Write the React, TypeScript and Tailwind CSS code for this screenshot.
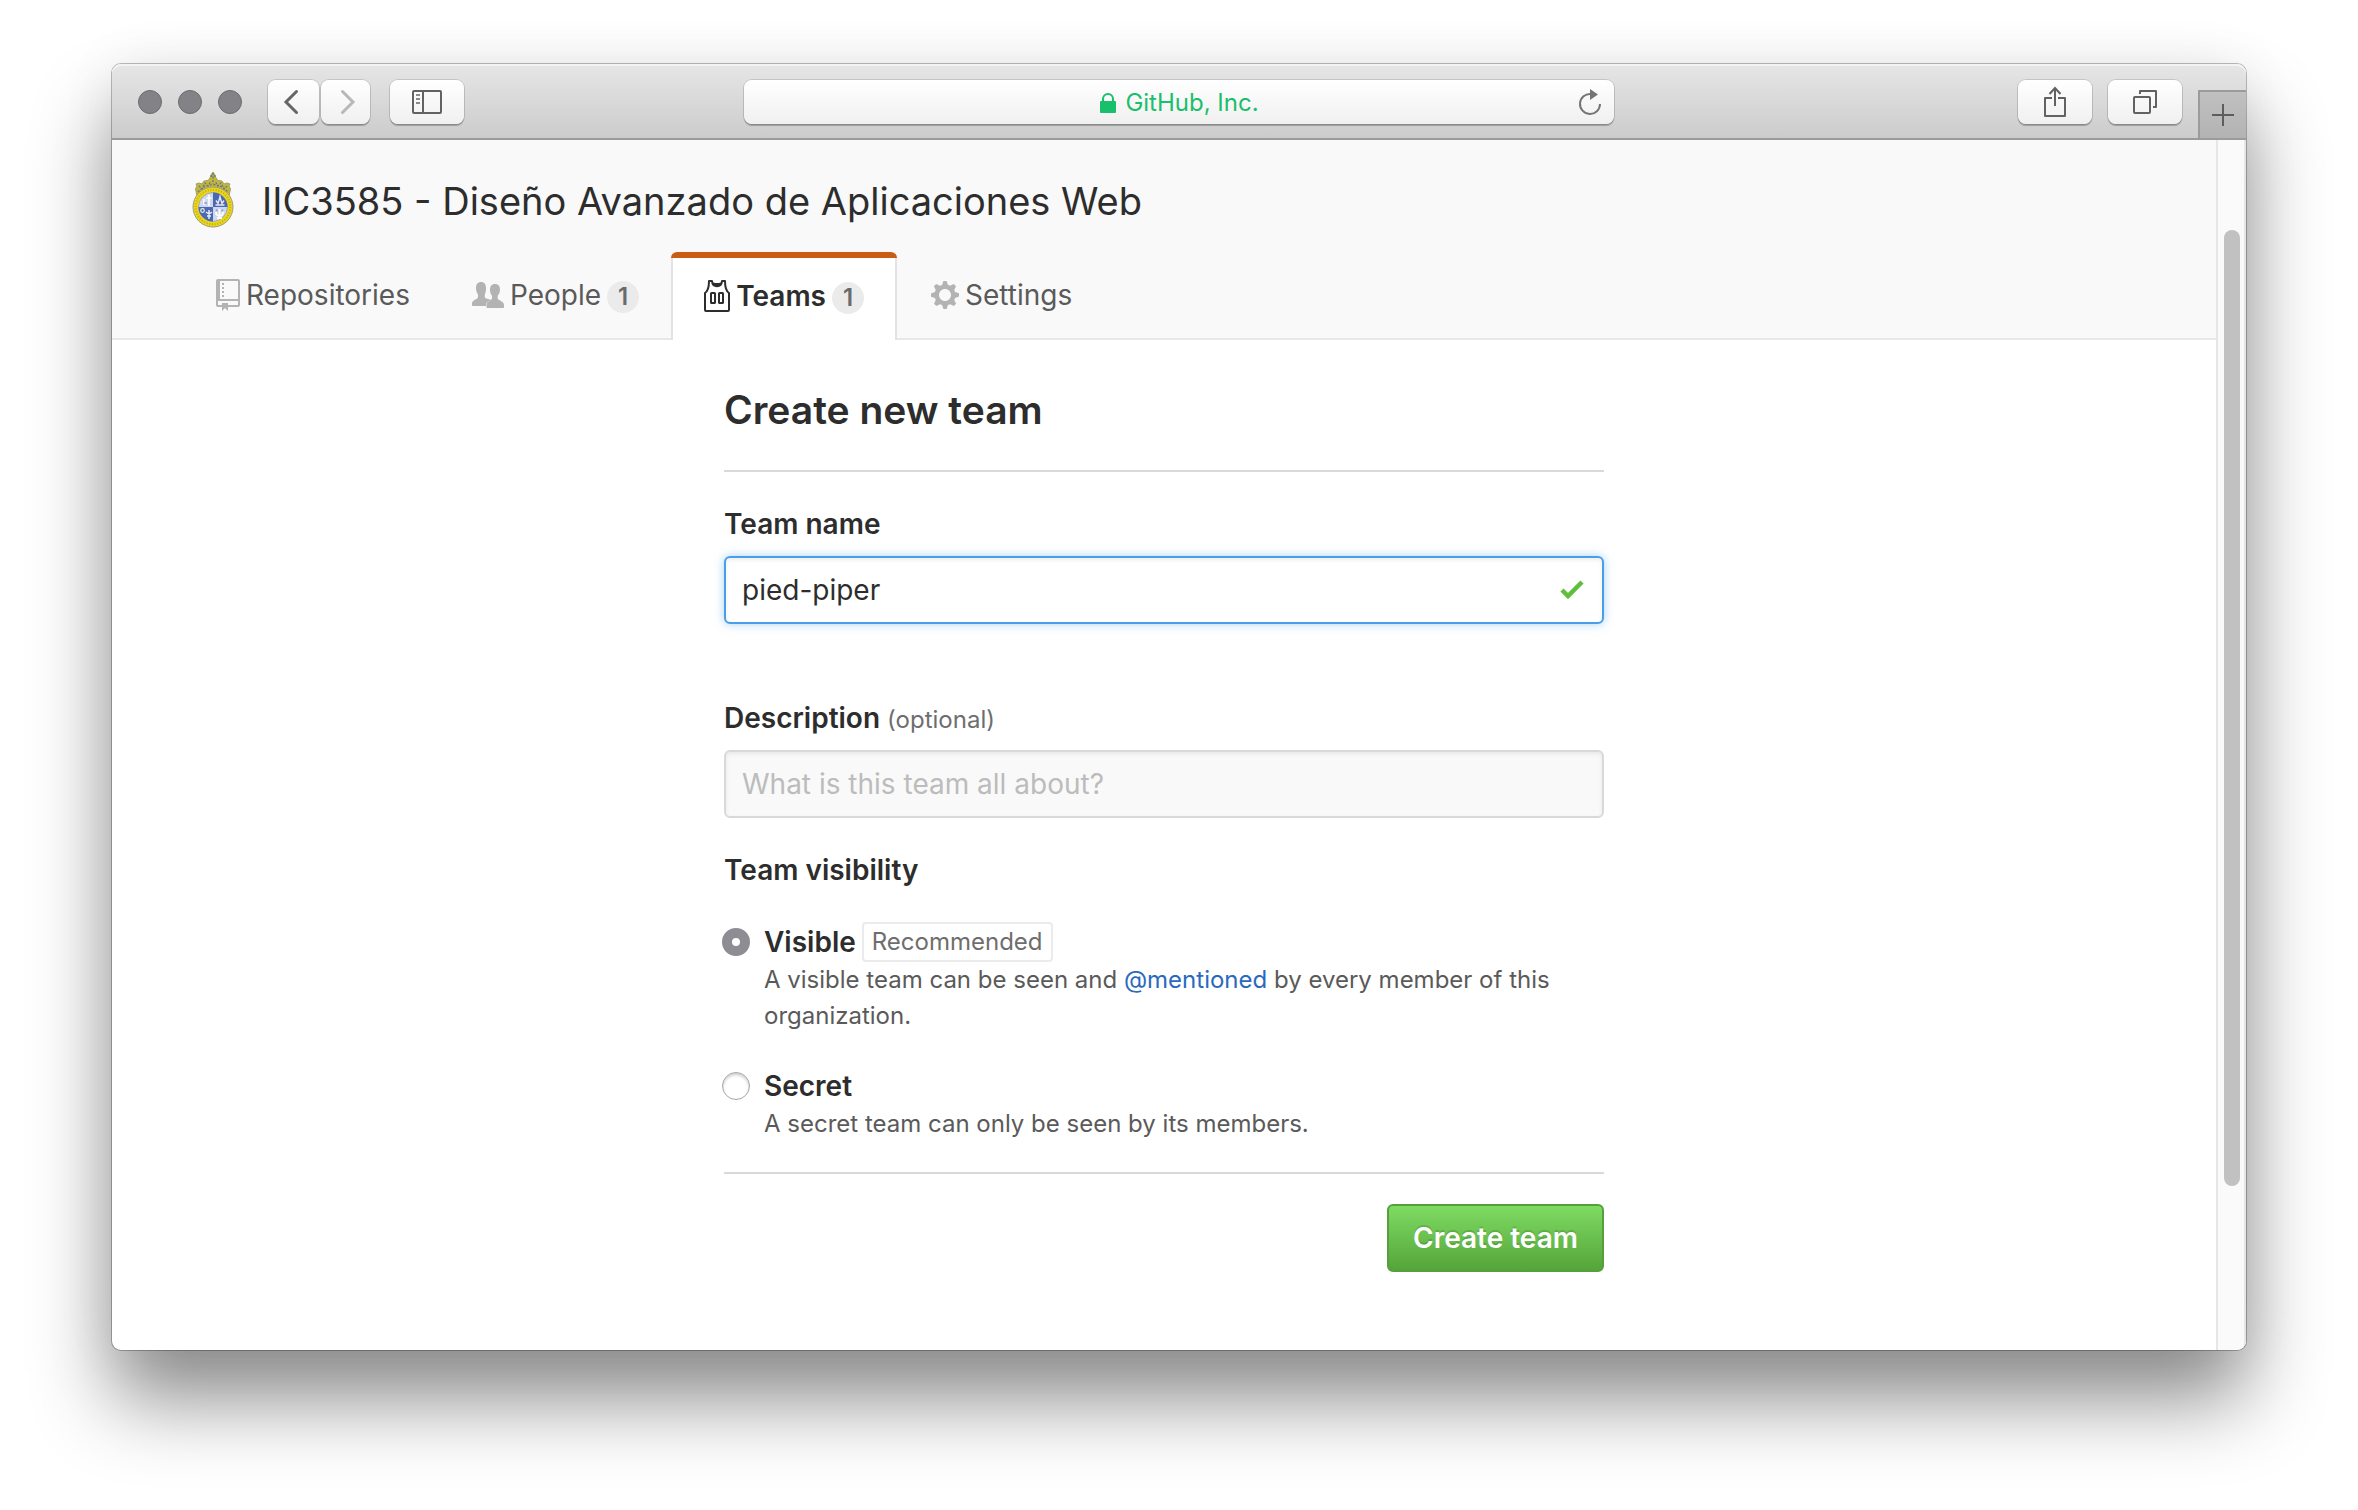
import React from "react";

function Crest() {
  return (
    <svg viewBox="0 0 42 56" className="h-14 w-[42px] shrink-0" aria-hidden="true">
      <path
        d="M5 24 L3.500 17 L5 14 L4 12 L7 11 L10 12 L12 9 L16 8.500 L18 6 L19 3 L21 0 L23 3 L24 6 L26 8.500 L30 9 L32 12 L35 11 L38 12 L37 14 L38.500 17 L37 24 Z"
        fill="#c3b739"
        stroke="#a09f68"
        strokeWidth="1"
      />
      <g fill="none" stroke="#66748c" strokeWidth="1.300" strokeDasharray="2 1.500">
        <path d="M21 1 V12" />
        <path d="M18.500 4 H23.500" />
        <path d="M6 20 Q12 13 21 12.500 Q30 13 36 20" />
        <path d="M7 14 L10 17 L13 11 L16 14 L19 9" />
        <path d="M35 14 L32 17 L29 11 L26 14 L23 9" />
      </g>
      <circle cx="21" cy="35" r="20" fill="#f0d80f" stroke="#9a9c88" strokeWidth="1" />
      <circle cx="21" cy="35" r="17.300" fill="none" stroke="#8c8d55" strokeWidth="2.200" strokeDasharray="1.200 1.500" opacity=".5" />
      <circle cx="21" cy="35" r="14.500" fill="#cfd8ee" stroke="#8f9cb0" strokeWidth=".8" />
      <path d="M21 35 V20.500 A14.500 14.500 0 0 1 35.500 35 Z M21 35 V49.500 A14.500 14.500 0 0 1 6.500 35 Z" fill="#4c69ae" />
      <path d="M17 22.500 V34 M14.500 26 H19.500 M12 27 V33" stroke="#fff" strokeWidth="1.600" />
      <path d="M12 31 H15" stroke="#6f86bf" strokeWidth="1.200" />
      <path d="M23.500 33 H32.500 M24 28.500 L26 31.500 L28 25 L30 31.500 L32 28.500 M28 23.500 V26" stroke="#e3e9f7" strokeWidth="1.400" fill="none" />
      <circle cx="10.500" cy="38.500" r="1.800" fill="none" stroke="#e6ecf8" strokeWidth="1.200" />
      <path d="M17 38 V47 M14 40 Q17 43 20 40 M15 44 H19" stroke="#e6ecf8" strokeWidth="1.500" fill="none" />
      <path d="M27.500 37 V46 M24 40 Q24 44 27.500 43.500 Q31 44 31 40 M25 46 H30" stroke="#fff" strokeWidth="1.800" fill="none" />
      <path d="M24 37.500 L25.500 39 M31 37.500 L29.500 39" stroke="#8399cb" strokeWidth="1.200" />
    </svg>
  );
}

function RepoIcon() {
  return (
    <svg viewBox="0 0 12 16" className="h-8 w-6 shrink-0 fill-[#b3b3b3]" aria-hidden="true">
      <path fillRule="evenodd" d="M4 9H3V8h1v1zm0-3H3v1h1V6zm0-2H3v1h1V4zm0-2H3v1h1V2zm8-1v12c0 .55-.45 1-1 1H6v2l-1.500-1.500L3 16v-2H1c-.55 0-1-.45-1-1V1c0-.55.45-1 1-1h10c.55 0 1 .45 1 1zm-1 10H1v2h2v-1h3v1h5v-2zm0-10H2v9h9V1z" />
    </svg>
  );
}

function PeopleIcon() {
  return (
    <svg viewBox="0 0 32 28" className="h-7 w-8 shrink-0 fill-[#b3b3b3]" aria-hidden="true">
      <path d="M9 1C5.500 1 4 3.500 4 7c0 3 .8 5 2 6.500v2.800C5.600 18.500 0 19 0 22.500V24c0 .6.500 1 1 1h13v-1c0-3 3-4 5-5-2-1.200-6-1.500-6.200-2.800v-2.700C13.500 12 14 10 14 7c0-3.500-1.500-6-5-6z" />
      <path d="M23 3c-3.500 0-5 2.300-5 5.600 0 2.900.7 4.700 2 6.200V17.600c-.5 1.900-5.500 2.600-5.500 6.400V26c0 .6.500 1 1 1H31c.6 0 1-.4 1-1v-2c0-3.800-6-4.500-6.300-6.400v-2.800c1.200-1.500 2.300-3.300 2.300-6.200C28 5.300 26.500 3 23 3z" />
    </svg>
  );
}

function JerseyIcon() {
  return (
    <svg viewBox="0 0 26 32" className="h-8 w-[26px] shrink-0" aria-hidden="true">
      <path d="M5 1H8C8.500 8 17.500 8 18 1H21C21 8 22 11 25 13V30C25 30.600 24.600 31 24 31H2C1.400 31 1 30.600 1 30V13C4 11 5 8 5 1Z" fill="none" stroke="#2d2d2d" strokeWidth="2" strokeLinejoin="round" />
      <path d="M8 1.500C9.500 3.500 16.500 3.500 18 1.500C17.500 8 8.500 8 8 1.500Z" fill="#2d2d2d" />
      <rect x="7" y="13" width="4" height="10" rx=".6" fill="none" stroke="#2d2d2d" strokeWidth="2" />
      <rect x="15" y="13" width="4" height="10" rx=".6" fill="none" stroke="#2d2d2d" strokeWidth="2" />
    </svg>
  );
}

function GearIcon() {
  return (
    <svg viewBox="0 0 14 16" className="h-8 w-7 shrink-0 fill-[#b3b3b3]" aria-hidden="true">
      <path fillRule="evenodd" d="M14 8.770v-1.600l-1.940-.64-.45-1.090.88-1.840-1.130-1.130-1.810.91-1.090-.45-.69-1.920h-1.600l-.63 1.940-1.110.45-1.840-.88-1.130 1.130.91 1.810-.45 1.090L0 7.230v1.590l1.940.64.45 1.090-.88 1.840 1.130 1.130 1.810-.91 1.090.45.69 1.920h1.590l.63-1.940 1.110-.45 1.840.88 1.130-1.130-.92-1.810.47-1.090L14 8.750v.02zM7 11c-1.660 0-3-1.340-3-3s1.340-3 3-3 3 1.340 3 3-1.340 3-3 3z" />
    </svg>
  );
}

const toolButton =
  "flex h-11 items-center justify-center rounded-lg bg-linear-to-b from-white to-[#f0f0f0] shadow-[0_0_0_1px_rgba(0,0,0,0.12),0_2px_1px_rgba(0,0,0,0.25)]";

function Toolbar() {
  return (
    <header className="flex h-[76px] items-start rounded-t-[9px] border-b-2 border-[#9b9b9b] bg-linear-to-b from-[#e6e6e6] to-[#cccccc] shadow-[inset_0_2px_0_#f3f3f3]">
      <div className="flex flex-1 items-start pt-4">
        <div className="ml-[26px] flex h-11 items-center gap-4">
          {["Close", "Minimize", "Zoom"].map((name) => (
            <button key={name} aria-label={name} className="size-6 rounded-full border border-[#6c6c70] bg-[#838287]" />
          ))}
        </div>
        <div className="ml-[26px] flex gap-0.5">
          <button aria-label="Back" className={toolButton + " w-[51px] pr-1.5"}>
            <svg viewBox="0 0 16 26" className="h-[26px] w-4" fill="none" stroke="#666666" strokeWidth="3">
              <path d="M13.500 2.500 L3 13 L13.500 23.500" strokeLinecap="round" />
            </svg>
          </button>
          <button aria-label="Forward" className={toolButton + " w-[49px] pl-1"}>
            <svg viewBox="0 0 16 26" className="h-[26px] w-4" fill="none" stroke="#b8b8b8" strokeWidth="3">
              <path d="M2.500 2.500 L13 13 L2.500 23.500" strokeLinecap="round" />
            </svg>
          </button>
        </div>
        <button aria-label="Sidebar" className={toolButton + " ml-5 w-[74px]"}>
          <svg viewBox="0 0 30 24" className="h-6 w-[30px]" fill="none" stroke="#626262" strokeWidth="2">
            <rect x="1" y="1" width="28" height="22" rx="1" />
            <path d="M11 1 V23" />
            <path d="M4 5 H8 M4 9 H8 M4 13 H8" stroke="#8a8a8a" />
          </svg>
        </button>
      </div>
      <div className="mt-4 flex h-11 w-[870px] items-center rounded-lg bg-linear-to-b from-white to-[#f0f0f0] px-3 shadow-[0_0_0_1px_rgba(0,0,0,0.12),0_2px_1px_rgba(0,0,0,0.25)]">
        <span className="w-6" />
        <div className="flex flex-1 items-center justify-center gap-2 pt-0.5 text-[24px] leading-8 text-[#19bf6c]">
          <svg viewBox="0 0 18 20" className="h-5 w-[18px]" aria-hidden="true">
            <rect x="1" y="8" width="16" height="12" rx="1" fill="#19bf6c" />
            <path d="M4 9 V6 A5 5 0 0 1 14 6 V9" fill="none" stroke="#19bf6c" strokeWidth="2" />
          </svg>
          <span>GitHub, Inc.</span>
        </div>
        <button aria-label="Reload" className="flex w-6 justify-center">
          <svg viewBox="0 0 24 28" className="h-7 w-6" fill="none">
            <path d="M13 6 A10 10 0 1 0 22 16" stroke="#757575" strokeWidth="2" />
            <path d="M12 1 L20 6.500 L12 12 Z" fill="#757575" />
          </svg>
        </button>
      </div>
      <div className="flex flex-1 items-start justify-end">
        <div className="mt-4 mr-4 flex gap-4">
          <button aria-label="Share" className={toolButton + " w-[74px]"}>
            <svg viewBox="0 0 22 32" className="h-8 w-[22px]" fill="none" stroke="#626262" strokeWidth="2">
              <path d="M8 12 H1 V30 H21 V12 H14" strokeLinejoin="round" />
              <path d="M11 20 V2 M5.500 8 L11 2 L16.500 8" />
            </svg>
          </button>
          <button aria-label="Show all tabs" className={toolButton + " w-[74px]"}>
            <svg viewBox="0 0 24 24" className="size-6" fill="none" stroke="#626262" strokeWidth="2">
              <rect x="1" y="7" width="16" height="16" rx="1" />
              <path d="M7 4 V1 H23 V17 H20" strokeLinejoin="round" />
            </svg>
          </button>
        </div>
        <button aria-label="New tab" className="mt-[26px] flex h-12 w-12 items-center justify-center border-t-2 border-l-2 border-[#9b9b9b] bg-linear-to-b from-[#c0c0c0] to-[#b3b3b3]">
          <svg viewBox="0 0 22 22" className="size-[22px]" stroke="#5d5d5d" strokeWidth="2">
            <path d="M11 0 V22 M0 11 H22" />
          </svg>
        </button>
      </div>
    </header>
  );
}

function Count({ children }: { children: React.ReactNode }) {
  return (
    <span className="mt-1 ml-1.5 flex size-8 items-center justify-center rounded-full bg-[#ebebeb] text-[24px] font-semibold leading-8 text-[#6b6b6b]">
      {children}
    </span>
  );
}

function OrgHeader() {
  return (
    <div className="border-b-2 border-[#e8e8e8] bg-[#f9f9f9] px-20 pt-8">
      <div className="flex h-14 items-center gap-7">
        <Crest />
        <h1 className="pt-0.5 text-[38px] leading-[60px] text-[#2d2d2d]">IIC3585 - Diseño Avanzado de Aplicaciones Web</h1>
      </div>
      <nav className="-mb-0.5 mt-6 flex h-[88px] text-[28px] leading-10 text-[#5a5a5a]">
        <a href="#repositories" className="flex h-[82px] items-center px-6 pt-1">
          <RepoIcon />
          <span className="ml-1.5">Repositories</span>
        </a>
        <a href="#people" className="ml-3.5 flex h-[82px] items-center px-6 pt-1">
          <PeopleIcon />
          <span className="ml-1.5">People</span>
          <Count>1</Count>
        </a>
        <a
          href="#teams"
          aria-current="page"
          className="ml-2 flex h-[88px] w-[226px] flex-col overflow-hidden rounded-t-md bg-[#ca5d14] pt-1.5 font-semibold text-[#2d2d2d]"
        >
          <span className="flex h-[82px] items-center justify-center border-x-2 border-[#e3e3e3] bg-white pb-1.5">
            <JerseyIcon />
            <span className="ml-1.5">Teams</span>
            <Count>1</Count>
          </span>
        </a>
        <a href="#settings" className="ml-2.5 flex h-[82px] items-center px-6 pt-1">
          <GearIcon />
          <span className="ml-1.5">Settings</span>
        </a>
      </nav>
    </div>
  );
}

function TeamForm() {
  return (
    <form className="mx-auto flex w-full max-w-[880px] flex-col pt-11 text-[28px] leading-10 text-[#2d2d2d]" onSubmit={(e) => e.preventDefault()}>
      <h2 className="border-b-2 border-[#d9d9d9] pb-[34px] text-[39px] font-semibold leading-[52px]">Create new team</h2>

      <label htmlFor="team-name" className="mt-8 self-start font-semibold">Team name</label>
      <div className="relative mt-3">
        <input
          id="team-name"
          type="text"
          defaultValue="pied-piper"
          className="block h-[68px] w-full rounded-md border-2 border-[#4a9de8] bg-white px-4 shadow-[inset_0_2px_4px_rgba(0,0,0,0.075),0_0_10px_rgba(81,167,232,0.5)] outline-none"
        />
        <svg viewBox="0 0 24 20" className="absolute top-6 right-5 h-5 w-6" aria-hidden="true">
          <path d="M2 10 L8 16 L22 2" fill="none" stroke="#5fbf3c" strokeWidth="4.500" />
        </svg>
      </div>

      <label htmlFor="team-description" className="mt-[74px] h-10 self-start font-semibold">
        Description <span className="text-[24px] leading-none font-normal text-[#6e6e6e]">(optional)</span>
      </label>
      <input
        id="team-description"
        type="text"
        placeholder="What is this team all about?"
        className="mt-3 h-[68px] w-full rounded-md border-2 border-[#d9d9d9] bg-[#f9f9f9] px-4 shadow-[inset_0_2px_4px_rgba(0,0,0,0.075)] outline-none placeholder:text-[#bcbcbc]"
      />

      <fieldset className="mt-8 border-b-2 border-[#d9d9d9] pb-[30px]">
        <legend className="h-10 font-semibold">Team visibility</legend>
        <div className="flex gap-3.5 pt-8">
          <input
            id="visible"
            type="radio"
            name="visibility"
            defaultChecked
            className="-ml-0.5 mt-1.5 size-7 shrink-0 appearance-none rounded-full border-[10px] border-[#8e8d93] bg-white"
          />
          <div>
            <div className="flex h-10 items-center gap-1.5">
              <label htmlFor="visible" className="font-semibold">Visible</label>
              <span className="h-10 rounded border-2 border-[#ebebeb] px-2 text-[24px] leading-9 text-[#6e6e6e]">Recommended</span>
            </div>
            <p className="text-[24px] leading-9 text-[#5a5a5a]">
              A visible team can be seen and <a href="#mentions" className="text-[#2a69bd]">@mentioned</a> by every member of this organization.
            </p>
          </div>
        </div>
        <div className="mt-8 flex gap-3.5">
          <input
            id="secret"
            type="radio"
            name="visibility"
            className="-ml-0.5 mt-1.5 size-7 shrink-0 appearance-none rounded-full border border-[#a6a6a6] bg-white shadow-[inset_0_2px_3px_rgba(0,0,0,0.2)]"
          />
          <div>
            <label htmlFor="secret" className="block h-10 font-semibold">Secret</label>
            <p className="text-[24px] leading-9 text-[#5a5a5a]">A secret team can only be seen by its members.</p>
          </div>
        </div>
      </fieldset>

      <button
        type="submit"
        className="mt-[30px] mb-[78px] h-[68px] self-end rounded-md border-2 border-[#55a03c] bg-linear-to-b from-[#7fdb63] to-[#55a53a] px-6 font-semibold text-white [text-shadow:0_-2px_0_rgba(0,0,0,0.15)]"
      >
        Create team
      </button>
    </form>
  );
}

export default function App() {
  return (
    <div className="min-h-screen bg-white px-28 pt-16 pb-40 font-[Inter,'Liberation_Sans',sans-serif]">
      <div className="rounded-[9px] bg-white shadow-[0_0_0_1px_rgba(0,0,0,0.26),0_50px_80px_rgba(0,0,0,0.45),0_0_60px_rgba(0,0,0,0.06)]">
        <Toolbar />
        <div className="flex overflow-hidden rounded-b-[9px]">
          <main className="min-w-0 flex-1">
            <OrgHeader />
            <TeamForm />
          </main>
          <div className="flex w-[30px] shrink-0 flex-col border-x-2 border-[#e6e6e6] bg-[#fafafa] px-1.5 pt-[90px]">
            <div className="h-[956px] w-4 rounded-full bg-[#c1c1c1]" />
          </div>
        </div>
      </div>
    </div>
  );
}
